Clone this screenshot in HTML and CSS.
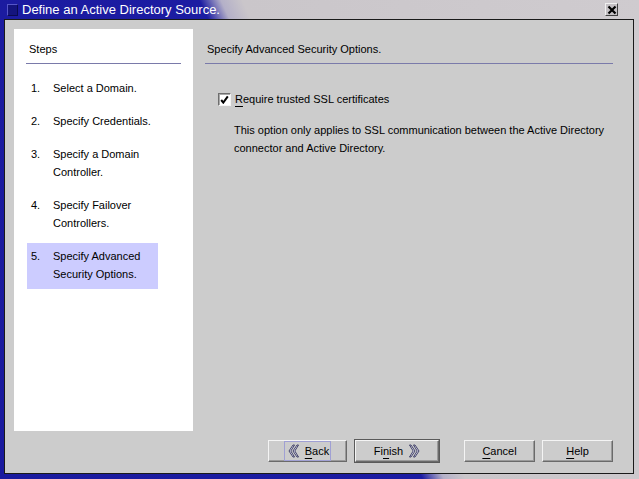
FILE: index.html
```html
<!DOCTYPE html>
<html lang="en">
<head>
    <meta charset="UTF-8">
    <title>Define an Active Directory Source.</title>
    <link rel="stylesheet" href="styles.css">
</head>
<body>
    <div class="window">
        <div class="titlebar">
            <span class="win-icon"></span>
            <span class="title">Define an Active Directory Source.</span>
            <span class="close-btn">
                <svg width="10" height="10" viewBox="0 0 10 10"><path d="M1.5 1.5 L8.5 8.5 M8.5 1.5 L1.5 8.5" stroke="#000" stroke-width="2.2"/></svg>
            </span>
        </div>
        <div class="frame">
            <div class="main">
                <div class="steps">
                    <div class="steps-head">Steps</div>
                    <ol class="step-list">
                        <li class="step"><span class="num">1.</span><span class="label">Select a Domain.</span></li>
                        <li class="step"><span class="num">2.</span><span class="label">Specify Credentials.</span></li>
                        <li class="step"><span class="num">3.</span><span class="label">Specify a Domain Controller.</span></li>
                        <li class="step"><span class="num">4.</span><span class="label">Specify Failover Controllers.</span></li>
                        <li class="step current"><span class="num">5.</span><span class="label">Specify Advanced Security Options.</span></li>
                    </ol>
                </div>
                <div class="pane">
                    <div class="pane-head">Specify Advanced Security Options.</div>
                    <div class="check-row">
                        <span class="checkbox">
                            <svg width="9" height="9" viewBox="0 0 9 9"><path d="M1.2 5 L3.3 7.6 L7.8 1.4" fill="none" stroke="#000" stroke-width="2"/></svg>
                        </span>
                        <span><u>R</u>equire trusted SSL certificates</span>
                    </div>
                    <p class="note">This option only applies to SSL communication between the Active Directory connector and Active Directory.</p>
                </div>
            </div>
            <div class="buttons">
                <button class="btn btn-back">
                    <span class="focus">
                        <svg class="chev" width="11" height="14" viewBox="0 0 11 14"><path d="M5 1 L1 7 L5 13 L6.5 13 L2.8 7 L6.5 1 Z M9 1 L5 7 L9 13 L10.5 13 L6.8 7 L10.5 1 Z" fill="#e6e6f4" stroke="#30305a" stroke-width="0.9"/></svg>
                        <span><u>B</u>ack</span>
                    </span>
                </button>
                <button class="btn btn-finish">
                    <span>Fi<u>n</u>ish</span>
                    <svg class="chev" width="11" height="14" viewBox="0 0 11 14"><path d="M6 1 L10 7 L6 13 L4.5 13 L8.2 7 L4.5 1 Z M2 1 L6 7 L2 13 L0.5 13 L4.2 7 L0.5 1 Z" fill="#e6e6f4" stroke="#30305a" stroke-width="0.9"/></svg>
                </button>
                <button class="btn btn-cancel"><span><u>C</u>ancel</span></button>
                <button class="btn btn-help"><span><u>H</u>elp</span></button>
            </div>
        </div>
    </div>
</body>
</html>
```

FILE: styles.css
```css
body {
    margin: 0;
    padding: 0;
    font-family: "Liberation Sans", Arial, sans-serif;
    font-size: 11px;
    color: #000;
    background: #c8c8c8;
}
.window {
    width: 639px;
    height: 479px;
    display: flex;
    flex-direction: column;
    background: linear-gradient(65deg, #1a1a9e 0%, #1c1ca2 49%, #b4b0c8 51.5%, #cac6ca 54%, #cfcbcf 100%);
}
.titlebar {
    height: 19px;
    display: flex;
    align-items: center;
    padding-left: 7px;
}
.win-icon {
    width: 9px;
    height: 10px;
    background: #14147e;
    border: 1px solid;
    border-color: #5656c8 #0a0a50 #0a0a50 #5656c8;
}
.title {
    margin-left: 4px;
    color: #fff;
    font-size: 13px;
}
.close-btn {
    margin-left: auto;
    margin-right: 21px;
    width: 11px;
    height: 11px;
    display: flex;
    align-items: center;
    justify-content: center;
    background: #c4c0c4;
    border: 1px solid;
    border-color: #f0f0f0 #404040 #404040 #f0f0f0;
}
.frame {
    flex: 1;
    margin: 0 5px 5px 4px;
    border: 1px solid #1a1a1a;
    background: #cccccc;
    padding: 9px 20px 11px 9px;
    display: flex;
    flex-direction: column;
}
.main {
    flex: 1;
    display: flex;
    gap: 12px;
}
.steps {
    width: 179px;
    background: #fff;
}
.steps-head {
    margin: 0 12px;
    padding: 11px 3px 5px;
    line-height: 18px;
    border-bottom: 1px solid #7a7aaa;
}
.step-list {
    list-style: none;
    margin: 11px 0 0 13px;
    padding: 0;
    display: flex;
    flex-direction: column;
    gap: 5px;
}
.step {
    width: 131px;
    box-sizing: border-box;
    padding: 4px 0 6px 4px;
    display: flex;
    line-height: 18px;
}
.step .num {
    width: 22px;
    flex-shrink: 0;
}
.step.current {
    background: #ccccff;
}
.pane {
    flex: 1;
}
.pane-head {
    padding: 11px 2px 5px;
    line-height: 18px;
    border-bottom: 1px solid #7a7aaa;
}
.check-row {
    margin-top: 26px;
    padding-left: 13px;
    display: flex;
    align-items: center;
    gap: 4px;
    line-height: 18px;
}
.checkbox {
    width: 11px;
    height: 11px;
    display: flex;
    align-items: center;
    justify-content: center;
    background: #fff;
    border: 1px solid;
    border-color: #6e6e6e #f4f4f4 #f4f4f4 #6e6e6e;
    box-shadow: inset 1px 1px 0 #a8a8a8;
}
u {
    text-underline-offset: 3px;
}
.note {
    margin: 13px 0 0 29px;
    max-width: 380px;
    line-height: 18px;
}
.buttons {
    margin-top: 9px;
    display: flex;
    justify-content: flex-end;
}
.btn {
    height: 22px;
    box-sizing: border-box;
    padding: 0;
    display: flex;
    align-items: center;
    justify-content: center;
    gap: 6px;
    font-family: inherit;
    font-size: 11px;
    color: #000;
    background: #cccccc;
    border: 1px solid;
    border-color: #f4f4f4 #6a6a6a #6a6a6a #f4f4f4;
    box-shadow: inset -1px -1px 0 #9a9a9a;
}
.btn-back {
    width: 79px;
}
.btn-finish {
    width: 84px;
    margin-left: 8px;
    box-shadow: inset -1px -1px 0 #9a9a9a, 0 0 0 1px #5a5a5a;
}
.btn-cancel {
    width: 71px;
    margin-left: 25px;
}
.btn-help {
    width: 71px;
    margin-left: 7px;
}
.focus {
    height: 18px;
    display: flex;
    align-items: center;
    gap: 6px;
    padding: 0 1px 0 3px;
    border: 1px solid #a0a0d4;
}
```
